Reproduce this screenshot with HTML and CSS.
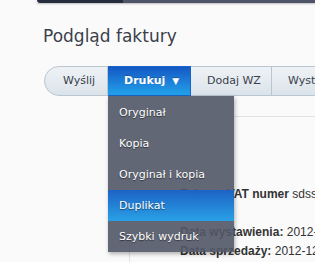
FILE: index.html
```html
<!DOCTYPE html>
<html lang="pl">
<head>
<meta charset="utf-8">
<title>Podgląd faktury</title>
<link rel="stylesheet" href="styles.css">
</head>
<body>
<div class="topbar"><div class="topbar-dark"></div><div class="topbar-light"></div></div>
<h1 class="title">Podgląd faktury</h1>
<div class="toolbar">
  <div class="btn btn-first">Wyślij</div>
  <div class="btn btn-active">Drukuj <span class="caret">▼</span>
    <ul class="menu">
      <li class="menu-item">Oryginał</li>
      <li class="menu-item">Kopia</li>
      <li class="menu-item">Oryginał i kopia</li>
      <li class="menu-item menu-item-hover">Duplikat</li>
      <li class="menu-item">Szybki wydruk</li>
    </ul>
  </div>
  <div class="btn">Dodaj WZ</div>
  <div class="btn">Wystaw korektę</div>
</div>
<div class="panel">
  <p class="line line-first"><b>Faktura VAT numer</b> sdssd</p>
  <p class="line line-second"><b>Data wystawienia:</b> 2012-12-01</p>
  <p class="line"><b>Data sprzedaży:</b> 2012-12-01</p>
</div>
</body>
</html>
```
FILE: styles.css
```css
html, body {
  margin: 0;
  padding: 0;
  background: #fafafa;
  overflow: hidden;
  width: 315px;
  height: 262px;
  font-family: "DejaVu Sans", sans-serif;
}
.topbar {
  display: flex;
  height: 3px;
  margin-left: 37px;
  box-shadow: 0 1px 2px rgba(0,0,0,0.25);
}
.topbar-dark {
  width: 86px;
  background: #262c3e;
  border-bottom-left-radius: 4px;
}
.topbar-light {
  flex: 1;
  background: #4f5569;
}
.title {
  margin: 22px 0 0 43px;
  font-size: 17px;
  font-weight: normal;
  color: #3b404c;
  line-height: 22px;
}
.toolbar {
  display: flex;
  margin: 19px 0 0 44px;
  height: 30px;
  white-space: nowrap;
  width: 271px;
  overflow: visible;
}
.btn {
  position: relative;
  box-sizing: border-box;
  height: 30px;
  line-height: 28px;
  padding: 0 16px;
  font-size: 11px;
  color: #3a3f4b;
  background: linear-gradient(#eef2f6, #dbe3ea);
  border: 1px solid #b9c5d1;
  border-left: none;
  flex-shrink: 0;
}
.btn-first {
  border-left: 1px solid #b9c5d1;
  border-radius: 15px 0 0 15px;
  padding: 0 15px 0 18px;
  width: 64px;
}
.btn-active {
  width: 83px;
  color: #fff;
  font-weight: bold;
  background: linear-gradient(#1558c4, #22a2ea);
  border-color: #1a63c8;
  text-shadow: 0 -1px 0 rgba(0,0,0,0.25);
}
.caret {
  font-size: 9px;
  margin-left: 3px;
}
.btn:nth-child(3) {
  width: 81px;
}
.btn:nth-child(4) {
  width: 43px;
  overflow: hidden;
  padding-right: 0;
  border-right: none;
}
.menu {
  position: absolute;
  top: 29px;
  left: 0;
  width: 126px;
  margin: 0;
  padding: 1px 0 0;
  list-style: none;
  background: rgba(82, 88, 104, 0.91);
  box-shadow: 1px 2px 4px rgba(0,0,0,0.3);
  z-index: 5;
}
.menu-item {
  height: 31px;
  line-height: 31px;
  padding-left: 11px;
  color: #fff;
  font-weight: normal;
  font-size: 11px;
  text-shadow: 0 1px 1px rgba(0,0,0,0.5);
}
.menu-item-hover {
  background: linear-gradient(rgba(26, 98, 200, 0.95), rgba(38, 164, 236, 0.95));
}
.panel {
  margin: 20px 0 0 129px;
  border-top: 1px solid #e2e2e2;
  border-left: 1px solid #e2e2e2;
  padding: 68px 0 0 50px;
  height: 77px;
  overflow: hidden;
  font-family: "Liberation Sans", Arial, sans-serif;
  font-size: 12px;
  color: #333;
  white-space: nowrap;
}
.line {
  margin: 0;
  line-height: 19px;
}
.line-first {
  margin-bottom: 19px;
}
```
